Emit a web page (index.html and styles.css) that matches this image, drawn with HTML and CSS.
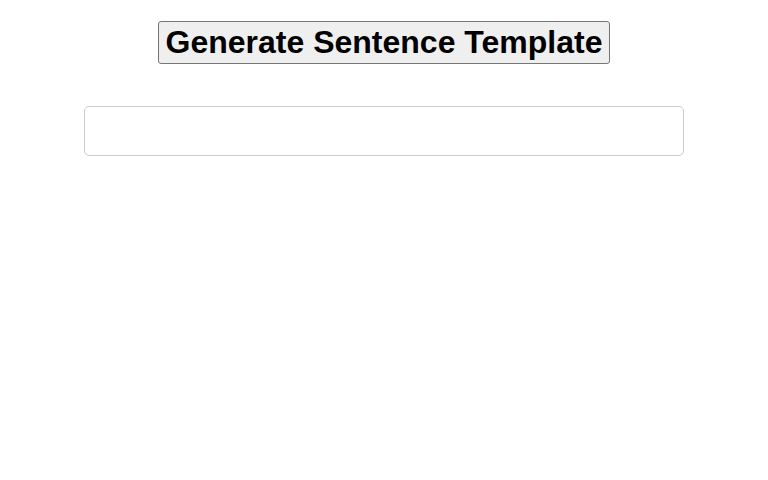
FILE: index.html
```html
<!DOCTYPE html>
<html>
<head>
<meta charset="utf-8">
<link rel="stylesheet" href="styles.css">
</head>
<body>
<div class="page">
  <div class="actions">
    <button class="generate">Generate Sentence Template</button>
  </div>
  <div class="output"></div>
</div>
</body>
</html>
```
FILE: styles.css
```css
html, body {
  margin: 0;
  padding: 0;
  background: #ffffff;
  font-family: "Liberation Sans", Arial, sans-serif;
}
.page {
  display: flex;
  flex-direction: column;
  align-items: center;
  padding-top: 21px;
}
.actions {
  display: flex;
  justify-content: center;
}
.generate {
  font-family: "Liberation Sans", Arial, sans-serif;
  font-size: 32px;
  font-weight: bold;
  color: #000;
  background: #efefef;
  border: 1px solid #767676;
  border-radius: 3px;
  padding: 1px 7px;
  height: 43px;
  margin: 0;
}
.output {
  box-sizing: border-box;
  width: 600px;
  height: 50px;
  margin-top: 42px;
  border: 1px solid #cccccc;
  border-radius: 5px;
}
```
